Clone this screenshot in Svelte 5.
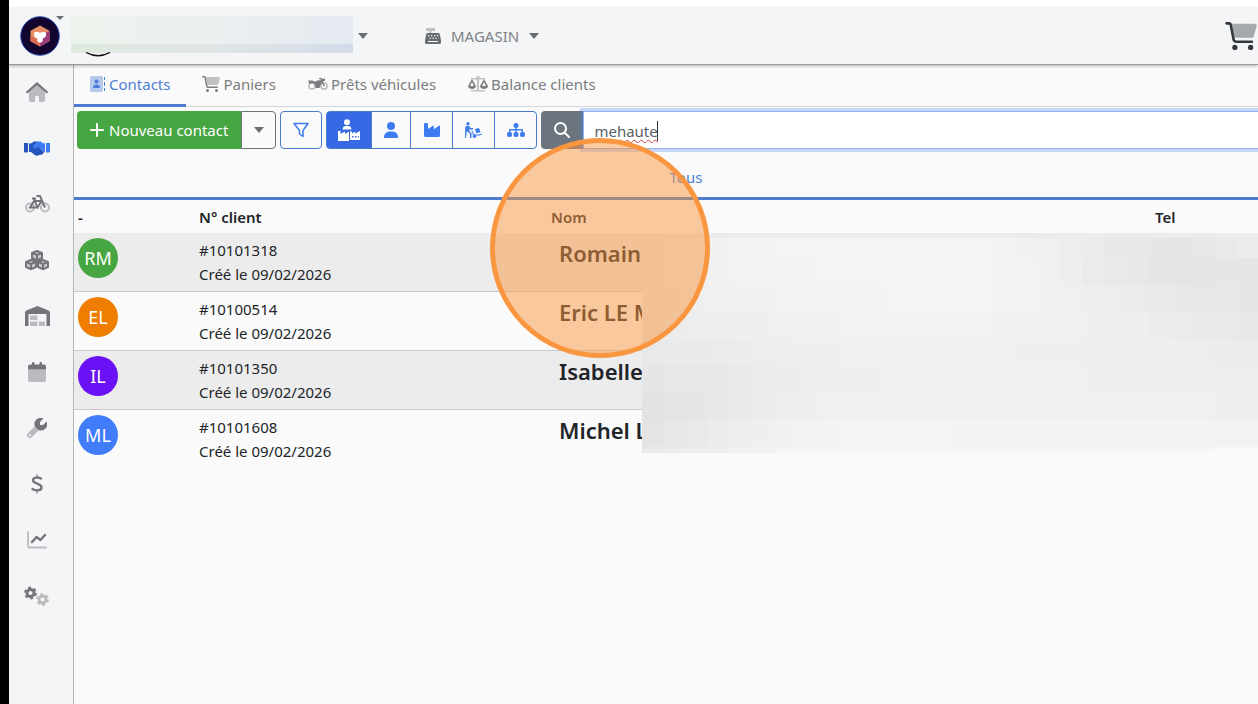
<script lang="ts">
  interface Contact {
    id: string;
    initials: string;
    name: string;
    created: string;
    color: string;
  }

  const tabs = [
    { label: 'Contacts', icon: 'book' },
    { label: 'Paniers', icon: 'cart' },
    { label: 'Prêts véhicules', icon: 'moto' },
    { label: 'Balance clients', icon: 'scale' }
  ];

  const menu = [
    { label: 'Accueil', icon: 'home' },
    { label: 'Clients', icon: 'handshake' },
    { label: 'Véhicules', icon: 'bike' },
    { label: 'Stock', icon: 'boxes' },
    { label: 'Entrepôt', icon: 'warehouse' },
    { label: 'Agenda', icon: 'calendar' },
    { label: 'Atelier', icon: 'wrench' },
    { label: 'Finances', icon: 'dollar' },
    { label: 'Statistiques', icon: 'chart' },
    { label: 'Paramètres', icon: 'gears' }
  ];

  const filters = [
    { label: 'Tous les contacts', icon: 'mixed' },
    { label: 'Particuliers', icon: 'user' },
    { label: 'Entreprises', icon: 'factory' },
    { label: 'Fournisseurs', icon: 'dolly' },
    { label: 'Groupes', icon: 'tree' }
  ];

  const contacts: Contact[] = [
    { id: '#10101318', initials: 'RM', name: 'Romain', created: '09/02/2026', color: '#46a641' },
    { id: '#10100514', initials: 'EL', name: 'Eric LE M', created: '09/02/2026', color: '#ef7d00' },
    { id: '#10101350', initials: 'IL', name: 'Isabelle', created: '09/02/2026', color: '#6a11f5' },
    { id: '#10101608', initials: 'ML', name: 'Michel L', created: '09/02/2026', color: '#417cfb' }
  ];

  // niveaux de gris de la zone masquée, ligne par ligne
  const levels = [
    [236, 241, 244, 245, 245, 244, 240, 232, 229, 235],
    [236, 241, 243, 244, 245, 245, 240, 233, 229, 230],
    [236, 240, 242, 243, 244, 244, 241, 237, 232, 230],
    [235, 238, 240, 242, 242, 242, 240, 239, 235, 232],
    [233, 235, 238, 240, 240, 240, 239, 239, 238, 235],
    [230, 232, 236, 239, 240, 240, 240, 239, 239, 237],
    [227, 231, 238, 241, 241, 241, 241, 241, 240, 239],
    [228, 236, 241, 244, 244, 243, 243, 243, 243, 242],
    [234, 239, 244, 246, 246, 246, 245, 246, 247, 248]
  ];
  const columns = 28;

  function shade(line: number[], column: number): string {
    const position = (column / (columns - 1)) * (line.length - 1);
    const start = Math.min(Math.floor(position), line.length - 2);
    const value = Math.round(line[start] + (line[start + 1] - line[start]) * (position - start));
    return `rgb(${value}, ${value}, ${value})`;
  }

  let activeTab = $state('Contacts');
  let activeFilter = $state('mixed');
  let search = $state('mehaute');
</script>

<svelte:head>
  <title>Contacts</title>
</svelte:head>

{#snippet icon(name: string)}
  {#if name === 'book'}
    <svg class="icon" viewBox="0 0 16 16" width="16" height="16">
      <rect x="0" y="0" width="13" height="16" rx="2" opacity="0.4" />
      <path d="M14 1h1v3h-1zM14 6h1v4h-1zM14 12h1v3h-1z" />
      <circle cx="6.5" cy="5.5" r="2" />
      <path d="M3 12c0-2.200 1.300-3.500 3-3.500h1c1.700 0 3 1.300 3 3.500z" />
    </svg>
  {:else if name === 'cart'}
    <svg class="icon" viewBox="0 0 576 512" width="18" height="16">
      <path opacity="0.45" d="M122 32h422c21 0 36 20 31 40l-54 192c-4 14-16 24-31 24H170z" />
      <path d="M24 0C11 0 0 11 0 24s11 24 24 24h45c4 0 7 3 8 6l52 271c6 34 36 59 70 59h289c13 0 24-11 24-24s-11-24-24-24H199c-11 0-21-8-23-20L124 45C119 19 96 0 69 0z" />
      <circle cx="176" cy="464" r="48" /><circle cx="464" cy="464" r="48" />
    </svg>
  {:else if name === 'moto'}
    <svg class="icon" viewBox="0 0 20 16" width="20" height="16">
      <g fill="none" stroke="currentColor" stroke-width="1.500" opacity="0.5">
        <circle cx="4" cy="10" r="3.100" /><circle cx="16" cy="10" r="3.100" />
      </g>
      <path d="M0 4.500h4.500L7 5.800l3-1.600h3L12.300 3H11V2h2.700l1 1L17 2.200V5l-2.200.3L17 10l-1 .5-2.300-3.800-2.200 5.300H7.500L7 8.800 4.500 7 1.500 8z" />
    </svg>
  {:else if name === 'scale'}
    <svg class="icon" viewBox="0 0 20 16" width="20" height="16">
      <path opacity="0.45" d="M3 2h5a2 2 0 0 1 4 0h5v1.500h-6V14h6v1.500H3V14h6V3.500H3z" />
      <path fill-rule="evenodd" d="M0 10 4 3l4 7c0 4-8 4-8 0zm2 0h4L4 6zM12 10l4-7 4 7c0 4-8 4-8 0zm2 0h4l-2-4z" />
    </svg>
  {:else if name === 'home'}
    <svg class="icon" viewBox="0 0 24 20" width="24" height="20">
      <path opacity="0.45" d="M4 9.500 12 2.500l8 7V18q0 2-2 2h-4v-5q0-1-1-1h-2q-1 0-1 1v5H6q-2 0-2-2z" />
      <path d="M.8 9.900 12 0l11.200 9.900-1.400 1.500L12 2.900l-9.800 8.500z" />
    </svg>
  {:else if name === 'handshake'}
    <svg class="icon" viewBox="0 0 26 16" width="26" height="16">
      <path d="M26 3h-4v9.500h3q1 0 1-1z" />
      <path fill="#2455bd" d="M0 3h4v8.500q0 1-1 1H1q-1 0-1-1zM5 3.500l2.500-.3L10 1.500h4L9.500 6l1.500 2 3.500-1.500L20 12l-1 2-2 .8-2 .2-1.500.8-2-.4L7 12H5z" />
      <path d="m9 6 4-4q.6-.6 1.500-.6h2.200L19 3.300h2V12h-1l-5.500-5-3.500 1.500Q8.600 8.200 9 6z" />
    </svg>
  {:else if name === 'bike'}
    <svg class="icon" viewBox="0 0 25 18" width="25" height="18">
      <g fill="none" stroke="currentColor" stroke-width="1.900">
        <g opacity="0.45"><circle cx="5" cy="12.500" r="4" /><circle cx="20" cy="12.500" r="4" /></g>
        <path d="M11.500 1H15l5 11.500M7 3.500h4M9 4l3.500 8.500H5l4-6.500h7.500l-4 6.500" />
      </g>
    </svg>
  {:else if name === 'boxes'}
    <svg class="icon" viewBox="0 0 24 20" width="24" height="20">
      <g stroke="currentColor" stroke-width="2" stroke-linejoin="round" fill="#cbcccd">
        <path d="m12 1 5 2v5l-5 2.500L7 8V3zM6 10l5 2v5l-5 2.200L1 17v-5zM18 10l5 2v5l-5 2.200-5-2.200v-5z" />
        <path fill="none" d="m7 3 5 2 5-2M12 5v5M1 12l5 2 5-2M6 14v5M13 12l5 2 5-2M18 14v5" />
      </g>
    </svg>
  {:else if name === 'warehouse'}
    <svg class="icon" viewBox="0 0 25 20" width="25" height="20">
      <path fill-rule="evenodd" d="M0 20V6.500q0-1.500 1.400-2L12.500 0l11.100 4.500q1.400.5 1.400 2V20h-3.500V9q0-1-1-1h-16q-1 0-1 1v11z" />
      <path opacity="0.45" d="M5 9.500h7.500V14H5zM5 15.500h7.500V20H5zM14 15.500h6V20h-6z" />
    </svg>
  {:else if name === 'calendar'}
    <svg class="icon" viewBox="0 0 18 20" width="18" height="20">
      <path opacity="0.45" d="M0 7.500h18V18q0 2-2 2H2q-2 0-2-2z" />
      <path d="M0 7.500V4.500q0-2 2-2h2V1q0-1 1.200-1T6.500 1v1.500h5V1q0-1 1.200-1T14 1v1.500h2q2 0 2 2v3z" />
    </svg>
  {:else if name === 'wrench'}
    <svg class="icon" viewBox="0 0 20 20" width="20" height="20">
      <path opacity="0.45" fill-rule="evenodd" d="m8.500 7.500 4 4-7.700 7.700a2.800 2.800 0 0 1-4-4zM2.800 16.300a1 1 0 1 0 .1 0z" />
      <path d="M16.500.6 13 4v3h3l3.500-3.500A6.200 6.200 0 0 1 11.500 12L8 8.500A6.200 6.200 0 0 1 16.500.6z" />
    </svg>
  {:else if name === 'dollar'}
    <svg class="icon" viewBox="0 0 12 20" width="12" height="20">
      <path opacity="0.45" d="M5 0h2v3.500H5zM5 16.500h2V20H5z" />
      <path fill="none" stroke="currentColor" stroke-width="2.400" stroke-linecap="round" d="M10 4.500C7 3 2 3 2 6.300c0 4.200 8.500 2.400 8.500 7 0 3.700-5.500 3.700-9 1.700" />
    </svg>
  {:else if name === 'chart'}
    <svg class="icon" viewBox="0 0 20 18" width="20" height="18">
      <path fill="none" stroke="currentColor" stroke-width="1.800" stroke-linecap="round" opacity="0.45" d="M1 1v13.500q0 2 2 2h16" />
      <path fill="none" stroke="currentColor" stroke-width="2.400" stroke-linecap="round" stroke-linejoin="round" d="m5 11 4.500-5 4 3L18 4" />
    </svg>
  {:else if name === 'gears'}
    <svg class="icon" viewBox="0 0 26 20" width="26" height="20">
      <g fill="none" stroke="currentColor">
        <circle cx="6.500" cy="7" r="3.500" stroke-width="2.800" />
        <circle cx="6.500" cy="7" r="5.400" stroke-width="2" stroke-dasharray="2.800 2.850" />
        <g opacity="0.45">
          <circle cx="18.500" cy="13.500" r="3.500" stroke-width="2.800" />
          <circle cx="18.500" cy="13.500" r="5.400" stroke-width="2" stroke-dasharray="2.800 2.850" />
        </g>
      </g>
    </svg>
  {:else if name === 'mixed'}
    <svg class="icon" viewBox="0 0 22 22" width="22" height="22">
      <circle cx="9" cy="3.200" r="3" />
      <path d="M4.500 10.500C4.500 8 6 7 8 7h2c2 0 3.500 1 3.500 3.500zM0 12h2.500v3L7 12.500V15l4-2.500V22H0zM12 12.500h2v2l3-2v2l5-2.500v9H12z" />
      <path fill="#3669e3" d="M14 17h1.500v1.500H14zM17 17h1.500v1.500H17zM20 17h1v1.500h-1z" />
    </svg>
  {:else if name === 'user'}
    <svg class="icon" viewBox="0 0 14 16" width="14" height="16">
      <circle cx="7" cy="4" r="4" />
      <path d="M0 15.200C0 12 2.300 9.500 5.500 9.500h3c3.200 0 5.500 2.500 5.500 5.700q0 .8-.8.8H.8q-.8 0-.8-.8z" />
    </svg>
  {:else if name === 'factory'}
    <svg class="icon" viewBox="0 0 16 14" width="16" height="14">
      <path d="M1 0h2q1 0 1 1v5l5-3.300q.8-.5.8.5v3L15 2.700q1-.5 1 .6V12.500Q16 14 14.500 14h-13Q0 14 0 12.500V1q0-1 1-1z" />
    </svg>
  {:else if name === 'dolly'}
    <svg class="icon" viewBox="0 0 17 16" width="17" height="16">
      <circle cx="3" cy="1.700" r="1.700" />
      <path d="M1.500 4h2.300l2 2H8v1.500H5.500l-1-.8v2.500l2 2V16H5v-4.300L1.800 9l-.4 4L.8 16H0l.2-10.500Q.3 4 1.500 4z" />
      <path d="m7 8 2 4.500h5l2.500-1 .5 1-2.500 1H8L6.500 8.500zM10 7l4-1 1.500 4.300-4.300 1z" />
      <circle cx="9.500" cy="14.300" r="1.700" />
    </svg>
  {:else if name === 'tree'}
    <svg class="icon" viewBox="0 0 18 14" width="18" height="14">
      <path d="M8.300 4h1.400v2H15q1 0 1 1v3h-1.500V7.500H9.700V10H8.300V7.500H3.500V10H2V7q0-1 1-1h5.300z" />
      <circle cx="9" cy="2.500" r="2.500" />
      <rect x="0" y="9" width="5" height="5" rx="2" /><rect x="6.500" y="9" width="5" height="5" rx="2" /><rect x="13" y="9" width="5" height="5" rx="2" />
    </svg>
  {/if}
{/snippet}

<div class="app">
  <div class="shell">
    <header class="topbar">
      <button class="logo" aria-label="Menu principal">
        <svg viewBox="0 0 40 40" width="40" height="40">
          <circle cx="20" cy="20" r="19.300" fill="#12052e" stroke="#2b50b8" stroke-width="1" />
          <path fill="#e58d62" d="m20 9.500 9.500 5.300v10.500L20 30.500l-9.500-5.200V14.800z" />
          <path fill="#9a3a78" d="M20 19.500 29.500 15v10.300L20 30.500z" />
          <path fill="#d9694f" d="m10.500 20 9.500 4v6.500l-9.500-5.200z" />
          <path fill="#fff" d="M14 17q2.500-2.500 6 0 3.500-2.500 6 0 .8 4.500-3.300 5.500v3L20 27l-2.700-1.500v-3Q13.200 21.500 14 17z" />
        </svg>
        <span class="caret small"></span>
      </button>

      <button class="account" aria-label="Compte">
        <span class="masked"></span>
        <svg class="arc" viewBox="0 0 26 5" width="26" height="5">
          <path fill="none" stroke="#111" stroke-width="1.400" d="M1 .5q12 6.500 24 0" />
        </svg>
        <span class="caret"></span>
      </button>

      <button class="shop">
        <svg viewBox="0 0 16 16" width="16" height="16" fill="#6b6e71">
          <path opacity="0.4" d="M1 0h9v3H6.500v2h-2V3H1z" />
          <path fill-rule="evenodd" d="M2.500 5h11q1 0 1.200 1l1.300 6v2.500q0 1.500-1.500 1.500h-13Q0 16 0 14.500V12l1.300-6q.2-1 1.200-1zM3 7v1.300h1.300V7zm3 0v1.300h1.300V7zm3 0v1.300h1.300V7zm3 0v1.300h1.300V7zM4.500 9.500v1.300h1.300V9.500zm3 0v1.300h1.300V9.500zm3 0v1.300h1.300V9.500zM3 13v1h10v-1z" />
        </svg>
        <span>MAGASIN</span>
        <span class="caret"></span>
      </button>

      <button class="basket" aria-label="Panier">
        <svg viewBox="0 0 576 512" width="32" height="28" fill="#32363a">
          <path opacity="0.4" d="M122 32h422c21 0 36 20 31 40l-54 192c-4 14-16 24-31 24H170z" />
          <path d="M24 0C11 0 0 11 0 24s11 24 24 24h45c4 0 7 3 8 6l52 271c6 34 36 59 70 59h289c13 0 24-11 24-24s-11-24-24-24H199c-11 0-21-8-23-20L124 45C119 19 96 0 69 0z" />
          <circle cx="176" cy="464" r="48" /><circle cx="464" cy="464" r="48" />
        </svg>
      </button>
    </header>

    <div class="body">
      <nav class="sidebar">
        {#each menu as item}
          <a href="#{item.icon}" class:active={item.icon === 'handshake'} aria-label={item.label}>
            {@render icon(item.icon)}
          </a>
        {/each}
      </nav>

      <main>
        <nav class="tabs">
          {#each tabs as tab}
            <a href="#{tab.icon}" class:active={activeTab === tab.label} onclick={() => (activeTab = tab.label)}>
              {@render icon(tab.icon)}{tab.label}
            </a>
          {/each}
        </nav>

        <div class="toolbar">
          <div class="group">
            <button class="new">
              <svg viewBox="0 0 14 14" width="14" height="14"><path fill="none" stroke="#fff" stroke-width="2" stroke-linecap="round" d="M7 1v12M1 7h12" /></svg>
              Nouveau contact
            </button>
            <button class="more" aria-label="Plus d'options"><span class="caret"></span></button>
          </div>

          <button class="funnel" aria-label="Filtrer">
            <svg viewBox="0 0 16 16" width="16" height="16"><path fill="none" stroke="currentColor" stroke-width="1.500" stroke-linejoin="round" d="M1 1.500h14L10 8.500v6l-3.500-2.500V8.500z" /></svg>
          </button>

          <div class="group kinds">
            {#each filters as filter}
              <button
                class:active={activeFilter === filter.icon}
                aria-label={filter.label}
                onclick={() => (activeFilter = filter.icon)}
              >
                {@render icon(filter.icon)}
              </button>
            {/each}
          </div>

          <div class="search">
            <button aria-label="Rechercher">
              <svg viewBox="0 0 16 16" width="16" height="16"><path fill="none" stroke="#fff" stroke-width="2" stroke-linecap="round" d="M10.500 10.500 15 15M12 6.500a5.500 5.500 0 1 1-11 0 5.500 5.500 0 0 1 11 0z" /></svg>
            </button>
            <input type="text" aria-label="Recherche" spellcheck="false" bind:value={search} />
            <span class="cursor"></span>
          </div>
        </div>

        <nav class="scope"><a href="#tous">Tous</a></nav>

        <div class="results">
          <table>
            <thead>
              <tr>
                <th class="col-avatar">-</th>
                <th class="col-id">N° client</th>
                <th class="col-name">Nom</th>
                <th>Tel</th>
              </tr>
            </thead>
            <tbody>
              {#each contacts as contact}
                <tr>
                  <td><span class="avatar" style="background: {contact.color}">{contact.initials}</span></td>
                  <td>{contact.id}<br />Créé le {contact.created}</td>
                  <td class="name">{contact.name}</td>
                  <td></td>
                </tr>
              {/each}
            </tbody>
          </table>
          <div class="mosaic">
            {#each levels as line}
              {#each { length: columns } as _, column}
                <span style="background: {shade(line, column)}"></span>
              {/each}
            {/each}
          </div>
        </div>
      </main>
    </div>
  </div>
  <div class="spotlight"></div>
</div>

<style>
  :global(body) {
    background: #fafafa;
  }

  .app {
    position: relative;
    display: flex;
    min-height: 100vh;
    box-sizing: border-box;
    border-left: 9px solid #000;
    overflow: hidden;
    font-family: 'Noto Sans', 'Open Sans', sans-serif;
    font-size: 15px;
    line-height: 24px;
    color: #212529;
  }

  .app * {
    box-sizing: border-box;
  }

  button {
    font: inherit;
    color: inherit;
    padding: 0;
    border: none;
    background: none;
    cursor: pointer;
  }

  a {
    text-decoration: none;
    color: inherit;
  }

  svg {
    display: block;
    flex: none;
  }

  .icon {
    fill: currentColor;
  }

  .shell {
    flex: 1;
    min-width: 0;
    display: flex;
    flex-direction: column;
    border-top: 8px solid #fff;
  }

  .caret {
    border: 5px solid transparent;
    border-top: 6px solid #6b6e71;
    border-bottom: none;
  }

  .caret.small {
    position: absolute;
    top: 0;
    right: -4px;
    border-width: 4px 4px 0;
  }

  .topbar {
    position: relative;
    z-index: 1;
    display: flex;
    align-items: center;
    height: 57px;
    padding: 0 1px 0 11px;
    background: #f4f5f7;
    border-bottom: 1px solid #999;
    box-shadow: 0 1px 3px rgba(0, 0, 0, 0.3);
    color: #808285;
  }

  .logo {
    position: relative;
    width: 40px;
    height: 40px;
  }

  .account {
    position: relative;
    display: flex;
    align-items: center;
    gap: 5px;
    margin-left: 11px;
  }

  .masked {
    width: 282px;
    height: 37px;
    margin-bottom: 4px;
    background: linear-gradient(rgba(255, 255, 255, 0.4) 76%, transparent 76%), linear-gradient(90deg, #dfeadf, #dfe6e6 50%, #d3dbe9);
  }

  .arc {
    position: absolute;
    left: 14px;
    bottom: 0;
  }

  .shop {
    display: flex;
    align-items: center;
    gap: 10px;
    margin-left: 57px;
  }

  .basket {
    margin-left: auto;
  }

  .body {
    flex: 1;
    display: flex;
  }

  .sidebar {
    flex: none;
    width: 64px;
    margin-top: -1px;
    padding-right: 8px;
    background: #f4f5f7;
  }

  .sidebar a {
    display: flex;
    align-items: center;
    justify-content: center;
    height: 56px;
    color: #737578;
  }

  .sidebar a.active {
    color: #3f7bf0;
  }

  main {
    flex: 1;
    min-width: 0;
    border-left: 1px solid #b3b5b8;
    background: #fafafa;
  }

  .tabs {
    display: flex;
    height: 42px;
    border-bottom: 1px solid #d5d7da;
    color: #7b7d80;
  }

  .tabs a {
    display: flex;
    align-items: center;
    gap: 3px;
    height: 42px;
    padding: 0 16px 2px;
    border-bottom: 3px solid transparent;
  }

  .tabs a.active {
    color: #4d7fd6;
    border-color: #4d7bd0;
  }

  .toolbar {
    display: flex;
    gap: 4px;
    height: 38px;
    margin: 4px 0 0 3px;
  }

  .group {
    display: flex;
  }

  .new {
    display: flex;
    align-items: center;
    gap: 5px;
    padding: 0 13px;
    border-radius: 4px 0 0 4px;
    background: #46a641;
    color: #fff;
  }

  .more {
    width: 35px;
    display: flex;
    align-items: center;
    justify-content: center;
    border: 1px solid #6c757d;
    border-radius: 0 4px 4px 0;
  }

  .funnel,
  .kinds button {
    display: flex;
    align-items: center;
    justify-content: center;
    width: 42px;
    border: 1px solid #4a7bcf;
    color: #3f7bf0;
  }

  .funnel {
    border-radius: 4px;
  }

  .kinds button {
    width: 43px;
    margin-left: -1px;
  }

  .kinds button:first-child {
    width: 46px;
    margin-left: 0;
    border-radius: 4px 0 0 4px;
  }

  .kinds button:last-child {
    border-radius: 0 4px 4px 0;
  }

  .kinds button:nth-child(2) {
    width: 40px;
  }

  .kinds button.active {
    background: #3669e3;
    color: #fff;
  }

  .search {
    position: relative;
    flex: 1;
    display: flex;
  }

  .search button {
    width: 42px;
    display: flex;
    align-items: center;
    justify-content: center;
    border-radius: 4px 0 0 4px;
    background: #6c757d;
  }

  .search input {
    flex: 1;
    min-width: 0;
    padding: 2px 10px 0;
    border: 1px solid #8fb0ea;
    border-right: none;
    border-radius: 0;
    outline: none;
    background: #fff;
    box-shadow: 0 0 0 3px rgba(65, 124, 251, 0.28);
    font: inherit;
    color: #5a5f64;
    text-decoration: underline wavy #c8434a 1px;
    text-decoration-skip-ink: none;
    text-underline-offset: 2px;
  }

  .cursor {
    position: absolute;
    left: 116px;
    top: 10px;
    width: 1px;
    height: 20px;
    background: #333;
  }

  .scope {
    height: 51px;
    padding: 16px 0 0 40px;
    border-bottom: 3px solid #4d7bd0;
    text-align: center;
    color: #4d7fd6;
  }

  .results {
    position: relative;
  }

  table {
    width: 100%;
    table-layout: fixed;
    border-collapse: collapse;
  }

  th {
    height: 33px;
    padding: 0 4px;
    text-align: left;
    font-weight: 600;
  }

  .col-avatar {
    width: 121px;
  }

  .col-id {
    width: 352px;
  }

  .col-name {
    width: 604px;
  }

  td {
    padding: 5px 4px;
    border-bottom: 1px solid #c9cacd;
    vertical-align: top;
  }

  tbody tr:nth-child(odd) {
    background: #ececec;
  }

  tbody tr:last-child td {
    border-bottom: none;
  }

  .avatar {
    display: flex;
    align-items: center;
    justify-content: center;
    width: 40px;
    height: 40px;
    border-radius: 50%;
    color: #fff;
    font-size: 18px;
  }

  td.name {
    padding: 8px 12px;
    font-size: 22px;
    font-weight: 600;
  }

  .mosaic {
    position: absolute;
    left: 568px;
    right: 0;
    top: 38px;
    bottom: 15px;
    display: grid;
    grid-template-columns: repeat(28, 1fr);
    grid-template-rows: 20px repeat(7, 1fr) 6px;
  }

  .spotlight {
    position: absolute;
    z-index: 2;
    left: 481px;
    top: 138px;
    width: 220px;
    height: 220px;
    border: 5px solid #f9963f;
    border-radius: 50%;
    background: rgba(249, 150, 64, 0.5);
    pointer-events: none;
  }
</style>
